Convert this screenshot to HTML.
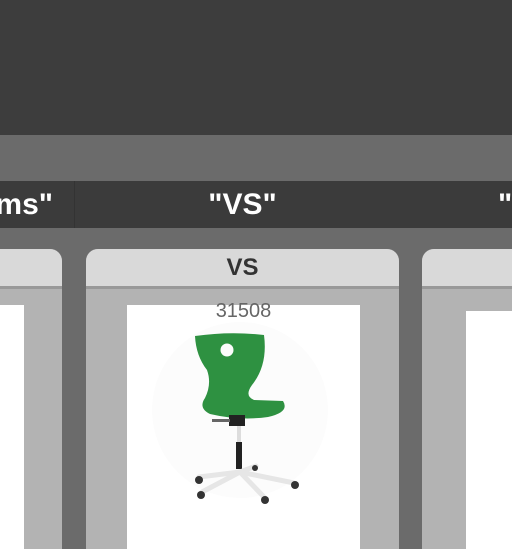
<!DOCTYPE html>
<html><head><style>
body{margin:0;width:512px;height:512px;overflow:hidden;background:#6b6b6b;font-family:"Liberation Sans",sans-serif;position:relative}
div{position:absolute;box-sizing:border-box}
</style></head><body>
<div style="left:0;top:0;width:512px;height:135px;background:#3d3d3d"></div>
<div style="left:0;top:135px;width:512px;height:46px;background:#6b6b6b"></div>
<div style="left:0;top:181px;width:512px;height:47px;background:#3b3b3b"></div>
<div style="left:74px;top:181px;width:1px;height:47px;background:#333"></div>
<div style="left:-37px;top:186px;width:90px;text-align:right;color:#fff;font-weight:bold;font-size:30px;line-height:38px">ms"</div>
<div style="left:86px;top:186px;width:313px;text-align:center;color:#fff;font-weight:bold;font-size:30px;line-height:38px">"VS"</div>
<div style="left:498px;top:186px;color:#fff;font-weight:bold;font-size:30px;line-height:38px">"</div>

<div style="left:-20px;top:249px;width:82px;height:300px;background:#b3b3b3;border-radius:12px 12px 0 0;overflow:hidden">
 <div style="left:0;top:0;width:82px;height:37px;background:#d9d9d9"></div>
 <div style="left:0;top:37px;width:82px;height:3px;background:#999"></div>
 <div style="left:0;top:56px;width:44px;height:260px;background:#fff"></div>
</div>
<div style="left:86px;top:249px;width:313px;height:300px;background:#b3b3b3;border-radius:12px 12px 0 0;overflow:hidden">
 <div style="left:0;top:0;width:313px;height:37px;background:#d9d9d9;text-align:center;font-weight:bold;font-size:24px;line-height:38px;color:#333">VS</div>
 <div style="left:0;top:37px;width:313px;height:3px;background:#999"></div>
 <div style="left:41px;top:56px;width:233px;height:260px;background:#fff"></div>
 <div style="left:41px;top:50px;width:233px;text-align:center;font-size:20px;color:#666;line-height:24px">31508</div>
</div>
<div style="left:422px;top:249px;width:120px;height:300px;background:#b3b3b3;border-radius:12px 12px 0 0;overflow:hidden">
 <div style="left:0;top:0;width:120px;height:37px;background:#d9d9d9"></div>
 <div style="left:0;top:37px;width:120px;height:3px;background:#999"></div>
 <div style="left:44px;top:62px;width:80px;height:260px;background:#fff"></div>
</div>

<svg style="position:absolute;left:0;top:0" width="512" height="512">
 <circle cx="240" cy="410" r="88" fill="#fcfcfc"/>
 <path d="M195 336 Q230 331 264 335 Q268 365 252 385 Q244 396 254 400 L283 401 Q290 412 268 417 Q240 421 210 414 Q198 408 205 398 Q212 384 207 370 Q196 356 195 336Z" fill="#2e9141"/>
 <circle cx="227" cy="350" r="6.5" fill="#fcfcfc"/>
 <rect x="229" y="415" width="16" height="11" fill="#222"/>
 <rect x="212" y="419" width="18" height="3" fill="#666"/>
 <rect x="237" y="426" width="4" height="16" fill="#ddd"/>
 <rect x="236" y="442" width="6" height="27" fill="#222"/>
 <g stroke="#e6e6e6" stroke-width="5" stroke-linecap="round">
  <line x1="240" y1="472" x2="199" y2="477"/>
  <line x1="240" y1="472" x2="202" y2="492"/>
  <line x1="240" y1="472" x2="264" y2="497"/>
  <line x1="240" y1="472" x2="294" y2="483"/>
  <line x1="240" y1="472" x2="256" y2="466"/>
 </g>
 <g fill="#333"><circle cx="199" cy="480" r="4"/><circle cx="201" cy="495" r="4"/><circle cx="265" cy="500" r="4"/><circle cx="295" cy="485" r="4"/><circle cx="255" cy="468" r="3"/></g>
</svg>
</body></html>
